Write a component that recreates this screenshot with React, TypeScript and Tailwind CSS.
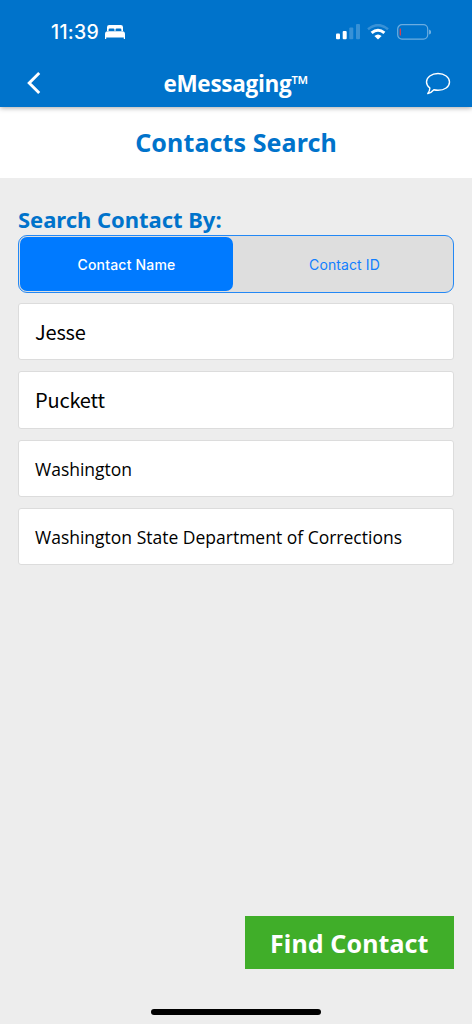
import { useState } from "react";

const tabs = ["Contact Name", "Contact ID"];

function StatusBar() {
  return (
    <div className="flex h-[60px] items-center justify-between pt-1 pl-[51px] pr-[41px]">
      <div className="flex items-center gap-[5px]">
        <span className="w-[49px] whitespace-nowrap font-['Inter',sans-serif] text-[19.5px] font-medium leading-6 tracking-[0.3px]">
          11:39
        </span>
        <svg width="21" height="16" viewBox="0 0 21 16" fill="currentColor">
          <path d="M2 7V3.2Q2 1 4.2 1H15.8Q18 1 18 3.2V7H16.4V5.7Q16.4 4.5 15.2 4.5H11.7Q10.5 4.5 10.5 5.7V7H9.5V5.7Q9.5 4.5 8.3 4.5H4.8Q3.6 4.5 3.6 5.7V7Z" />
          <path d="M0 10.3Q0 7.3 2.7 7.3H17.3Q20 7.3 20 10.3V15H18.8V13.6H1.2V15H0Z" />
        </svg>
      </div>
      <div className="flex items-center">
        <svg width="25" height="16" viewBox="0 0 25 16" fill="currentColor">
          <rect x="0" y="9.5" width="4" height="5.8" rx="1" />
          <rect x="6.7" y="7" width="4" height="8.3" rx="1" />
          <rect x="13.3" y="3.5" width="4" height="11.8" rx="1" opacity=".22" />
          <rect x="20" y="0" width="4" height="15.3" rx="1" opacity=".22" />
        </svg>
        <svg className="ml-[6px]" width="22" height="16" viewBox="0 0 22 16" fill="none" stroke="currentColor">
          <path d="M1 5.2Q11 -3 21 5.2" strokeWidth="2.5" opacity=".22" />
          <path d="M4.6 8.9Q11 3.5 17.4 8.9" strokeWidth="3" />
          <path d="M7.4 12Q11 9 14.6 12L11 15.6Z" fill="currentColor" stroke="none" />
        </svg>
        <svg className="ml-[8px]" width="34" height="16" viewBox="0 0 34 16" fill="none">
          <rect x=".7" y=".7" width="30" height="14.4" rx="4.3" stroke="#fff" strokeWidth="1.2" opacity=".42" />
          <path d="M3.3 4.5V11.5" stroke="#dc3d4b" strokeWidth="1.3" />
          <path d="M32.2 5.4Q34 6 34 8T32.2 10.6Z" fill="#fff" opacity=".5" />
        </svg>
      </div>
    </div>
  );
}

export default function App() {
  const [active, setActive] = useState(0);

  return (
    <div className="flex h-screen w-full flex-col bg-[#ededed] font-['Open_Sans',sans-serif]">
      <header className="relative h-[107px] shrink-0 bg-[#0073cb] text-white shadow-[0_1px_5px_rgba(0,0,0,0.35)]">
        <StatusBar />
        <div className="flex h-[47px] items-center justify-between pb-px pl-[27px] pr-[21px]">
          <button aria-label="Back">
            <svg width="15" height="24" viewBox="0 0 15 24" fill="none" stroke="currentColor" strokeWidth="2.9">
              <path d="M12.2 2L2.2 12L12.2 22" />
            </svg>
          </button>
          <h1 className="pt-0.5 pl-[5px] text-[22.5px] font-bold leading-7 tracking-[-0.28px]">
            eMessaging™
          </h1>
          <button aria-label="Messages">
            <svg width="26" height="23" viewBox="0 0 26 23" fill="none" stroke="currentColor" strokeWidth="1.4" strokeLinejoin="round">
              <path d="M13 1.5C19.5 1.5 24.5 5.2 24.5 10S19.5 18.3 13 18.3Q10.8 18.3 8.9 17.8Q6.5 20.8 2.8 21.5Q4.7 19.3 4.9 16Q1.5 13.5 1.5 10C1.5 5.2 6.5 1.5 13 1.5Z" />
            </svg>
          </button>
        </div>
      </header>

      <div className="flex h-[71px] shrink-0 items-center justify-center bg-white pb-0.5">
        <h2 className="font-['Noto_Sans',sans-serif] text-[25px] font-bold leading-8 tracking-[0.1px] text-[#0073cb]">
          Contacts Search
        </h2>
      </div>

      <main className="flex flex-1 flex-col px-[18px] pt-[26px]">
        <h3 className="h-[31px] font-['Noto_Sans',sans-serif] text-[22px] font-bold leading-[30px] tracking-[-0.03px] text-[#0073cb]">
          Search Contact By:
        </h3>
        <div className="flex h-[58px] rounded-[9px] border-[1.5px] border-[#2388f5] bg-[#dedede] p-px">
          {tabs.map((tab, i) => (
            <button
              key={tab}
              onClick={() => setActive(i)}
              className={`rounded-[7px] font-['Inter',sans-serif] text-[14px] tracking-[0.2px] first:w-[213px] last:flex-1 last:pl-1 last:tracking-[0.1px] ${
                active === i
                  ? "bg-[#007aff] font-medium text-white"
                  : "text-[#107fff]"
              }`}
            >
              {tab}
            </button>
          ))}
        </div>

        <div className="mt-[10px] flex flex-col gap-[11px] text-black">
          <div className="flex h-[57.3px] items-center rounded-[3px] border border-[#dcdcdc] bg-white px-4 font-['Noto_Sans_CJK_JP',sans-serif] text-[20px] tracking-[-0.2px]">
            Jesse
          </div>
          <div className="flex h-[57.3px] items-center rounded-[3px] border border-[#dcdcdc] bg-white px-4 font-['Noto_Sans_CJK_JP',sans-serif] text-[20px] tracking-[-0.2px]">
            Puckett
          </div>
          <div className="flex h-[57.3px] items-center rounded-[3px] border border-[#dcdcdc] bg-white px-4 pt-0.5 text-[17.5px]">
            Washington
          </div>
          <div className="flex h-[57.3px] items-center rounded-[3px] border border-[#dcdcdc] bg-white px-4 pt-0.5 text-[17.5px]">
            Washington State Department of Corrections
          </div>
        </div>

        <button className="mt-auto h-[53px] w-[209.5px] self-end bg-[#40ae29] pt-0.5 font-['Noto_Sans',sans-serif] text-[25px] font-bold tracking-[0.1px] text-white">
          Find Contact
        </button>
        <div className="mt-10 mb-[9px] h-[6px] w-[170px] self-center rounded-full bg-black" />
      </main>
    </div>
  );
}
